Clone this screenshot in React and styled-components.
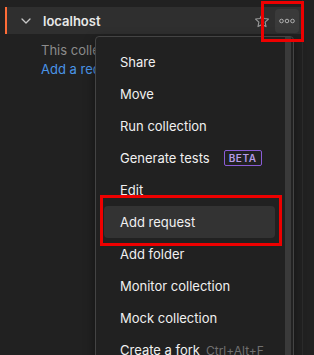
import styled, { createGlobalStyle } from 'styled-components'

const GlobalStyle = createGlobalStyle`
  html, body {
    margin: 0;
    padding: 0;
    background: #212121;
  }
  body {
    font-family: Inter, "Noto Sans", "Liberation Sans", sans-serif;
    -webkit-font-smoothing: antialiased;
  }
`

const menuItems = [
  { label: 'Share' },
  { label: 'Move' },
  { label: 'Run collection' },
  { label: 'Generate tests', badge: 'BETA' },
  { label: 'Edit' },
  { label: 'Add request', active: true },
  { label: 'Add folder' },
  { label: 'Monitor collection' },
  { label: 'Mock collection' },
  { label: 'Create a fork', shortcut: 'Ctrl+Alt+F' },
]

const App = () => {
  return (
    <>
      <GlobalStyle />
      <Page>
        <Sidebar>
          <CollectionRow>
            <Chevron width="10" height="6" viewBox="0 0 10 6">
              <path d="M1 1l4 4 4-4" fill="none" stroke="#c8c8c8" strokeWidth="1.3" strokeLinecap="round" strokeLinejoin="round" />
            </Chevron>
            <CollectionName>localhost</CollectionName>
            <RowActions>
              <svg width="16" height="16" viewBox="0 0 16 16">
                <path
                  d="M8 1.4l1.95 4.1 4.5.55-3.3 3.1.85 4.45L8 11.4l-4 2.2.85-4.45-3.3-3.1 4.5-.55z"
                  fill="none"
                  stroke="#9a9a9a"
                  strokeWidth="1.1"
                  strokeLinejoin="round"
                />
              </svg>
              <DotsButton>
                <svg width="16" height="6" viewBox="0 0 16 6">
                  <circle cx="2.5" cy="3" r="1.8" fill="none" stroke="#b0b0b0" strokeWidth="1" />
                  <circle cx="8" cy="3" r="1.8" fill="none" stroke="#b0b0b0" strokeWidth="1" />
                  <circle cx="13.5" cy="3" r="1.8" fill="none" stroke="#b0b0b0" strokeWidth="1" />
                </svg>
              </DotsButton>
            </RowActions>
          </CollectionRow>
          <EmptyState>
            <EmptyText>This collection is empty.</EmptyText>
            <EmptyLink>Add a request to start working.</EmptyLink>
          </EmptyState>
        </Sidebar>

        <Menu>
          <MenuList>
            {menuItems.map((item) => (
              <MenuItem key={item.label} $active={item.active}>
                <span>{item.label}</span>
                {item.badge && <Badge>{item.badge}</Badge>}
                {item.shortcut && <Shortcut>{item.shortcut}</Shortcut>}
              </MenuItem>
            ))}
          </MenuList>
          <ScrollTrack />
        </Menu>

        <Highlight $left={261} $top={1} $width={43} $height={41} />
        <Highlight $left={100} $top={195} $width={182} $height={51} />
      </Page>
    </>
  )
}

export default App

const Page = styled.div`
  position: relative;
  width: 314px;
  height: 355px;
  overflow: hidden;
  background: #212121;
`

const Sidebar = styled.div`
  width: 303px;
  height: 100%;
  padding-top: 7px;
  box-sizing: border-box;
  border-right: 1px solid #2c2c2c;
`

const CollectionRow = styled.div`
  display: flex;
  align-items: center;
  height: 27px;
  margin-left: 5px;
  margin-right: 1px;
  padding-left: 14px;
  background: #2f2f2f;
  border-left: 2px solid #ff6c37;
  box-sizing: border-box;
`

const Chevron = styled.svg`
  flex: none;
  margin-right: 12px;
`

const CollectionName = styled.span`
  flex: 1;
  color: #e8e8e8;
  font-size: 13px;
  font-weight: 600;
`

const RowActions = styled.div`
  display: flex;
  align-items: center;
  gap: 5px;
  margin-right: 2px;
`

const DotsButton = styled.div`
  display: flex;
  align-items: center;
  justify-content: center;
  width: 24px;
  height: 24px;
  border-radius: 4px;
  background: #3a3a3a;
`

const EmptyState = styled.div`
  display: flex;
  flex-direction: column;
  gap: 3px;
  padding: 8px 0 0 41px;
  font-size: 13px;
  line-height: 16px;
  white-space: nowrap;
`

const EmptyText = styled.span`
  color: #8c8c8c;
`

const EmptyLink = styled.span`
  color: #4a95e8;
`

const Menu = styled.div`
  position: absolute;
  left: 95px;
  top: 36px;
  width: 199px;
  height: 340px;
  display: flex;
  background: #212121;
  border: 1px solid #444;
  border-radius: 4px;
  box-shadow: 0 4px 12px rgba(0, 0, 0, 0.4);
  box-sizing: border-box;
`

const MenuList = styled.div`
  flex: 1;
  display: flex;
  flex-direction: column;
  padding: 9px 10px 0 8px;
`

const MenuItem = styled.div`
  display: flex;
  align-items: center;
  height: 32px;
  padding-left: 16px;
  border-radius: 4px;
  color: #f0f0f0;
  font-size: 13px;
  white-space: nowrap;
  background: ${(props) => (props.$active ? '#333333' : 'transparent')};
`

const Badge = styled.span`
  margin-left: 14px;
  padding: 0 4px;
  height: 14px;
  line-height: 14px;
  border: 1px solid #8a5cd6;
  border-radius: 2px;
  color: #b59be6;
  font-size: 10px;
  font-weight: 600;
  letter-spacing: 0.6px;
`

const Shortcut = styled.span`
  margin-left: 6px;
  color: #707070;
  font-size: 12px;
`

const ScrollTrack = styled.div`
  width: 6px;
  margin-right: 2px;
  background: #3a3a3a;
`

const Highlight = styled.div`
  position: absolute;
  left: ${(props) => props.$left}px;
  top: ${(props) => props.$top}px;
  width: ${(props) => props.$width}px;
  height: ${(props) => props.$height}px;
  border: 3px solid #ee0000;
  box-sizing: border-box;
  pointer-events: none;
`
